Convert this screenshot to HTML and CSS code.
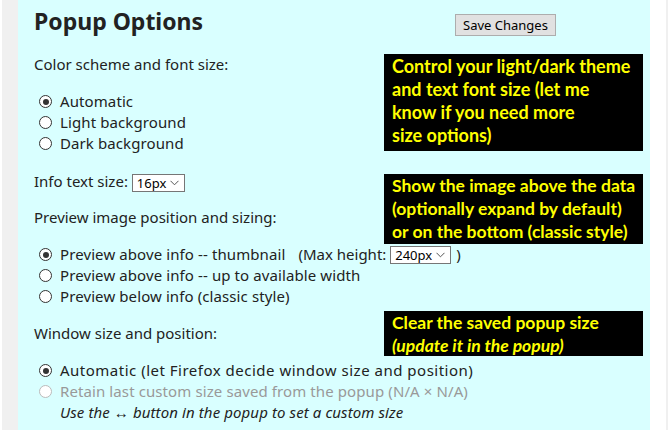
FILE: index.html
```html
<!DOCTYPE html>
<html>
<head>
<meta charset="utf-8">
<link rel="stylesheet" href="styles.css">
</head>
<body>
<div class="page">
  <div class="gutter-left"></div>
  <main class="panel">
    <header class="header">
      <h1 class="title">Popup Options</h1>
      <button class="save-btn" type="button">Save Changes</button>
    </header>

    <p class="label first">Color scheme and font size:</p>
    <ul class="radios">
      <li><span class="radio checked"></span>Automatic</li>
      <li><span class="radio"></span>Light background</li>
      <li><span class="radio"></span>Dark background</li>
    </ul>
    <p class="label info">Info text size: <span class="select select-16"><span class="select-text">16px</span><svg class="chev" width="9" height="6" viewBox="0 0 9 6"><path d="M0.5 0.8 L4.5 4.8 L8.5 0.8" fill="none" stroke="#555" stroke-width="1"/></svg></span></p>

    <p class="label">Preview image position and sizing:</p>
    <ul class="radios">
      <li><span class="radio checked"></span>Preview above info -- thumbnail<span class="maxh">(Max height: <span class="select select-240"><span class="select-text">240px</span><svg class="chev" width="9" height="6" viewBox="0 0 9 6"><path d="M0.5 0.8 L4.5 4.8 L8.5 0.8" fill="none" stroke="#555" stroke-width="1"/></svg></span> )</span></li>
      <li><span class="radio"></span>Preview above info -- up to available width</li>
      <li><span class="radio"></span>Preview below info (classic style)</li>
    </ul>

    <p class="label">Window size and position:</p>
    <ul class="radios">
      <li class="wide"><span class="radio checked"></span>Automatic (let Firefox decide window size and position)</li>
      <li class="disabled"><span class="radio"></span>Retain last custom size saved from the popup (N/A × N/A)</li>
      <li class="hint">Use the ↔ button in the popup to set a custom size</li>
    </ul>

    <div class="callout callout-1">Control your light/dark theme<br>and text font size (let me<br>know if you need more<br>size options)</div>
    <div class="callout callout-2">Show the image above the data<br>(optionally expand by default)<br>or on the bottom (classic style)</div>
    <div class="callout callout-3">Clear the saved popup size<br><em>(update it in the popup)</em></div>
  </main>
  <div class="gutter-right"></div>
</div>
</body>
</html>
```

FILE: styles.css
```css
html, body {
  margin: 0;
  padding: 0;
  background: #ffffff;
}

.page {
  display: flex;
  height: 430px;
  overflow: hidden;
}

.gutter-left {
  width: 16px;
  margin-left: 2px;
  background: #f0f0f0;
  flex: none;
}

.panel {
  position: relative;
  width: 616px;
  flex: none;
  background: #d9ffff;
  padding: 0 0 0 16px;
  font-family: "Noto Sans", sans-serif;
  font-size: 15px;
  color: #222;
}

.gutter-right {
  width: 16px;
  flex: none;
  background: #ffffff;
  border-right: 2px solid #f0f0f0;
}

.header {
  display: flex;
  align-items: flex-start;
  height: 44px;
}

.title {
  margin: 6px 0 0 0;
  font-size: 23px;
  line-height: 30px;
  font-weight: 700;
  color: #222;
}

.save-btn {
  margin: 14px 94px 0 auto;
  width: 101px;
  height: 22px;
  padding: 0;
  background: #e1e1e1;
  border: 1px solid #adadad;
  font-family: "Noto Sans", sans-serif;
  font-size: 13px;
  color: #000;
}

.label {
  margin: 0;
  line-height: 21px;
}

.label.first {
  margin-top: 10px;
}

.label.info {
  margin-top: 17px;
  margin-bottom: 15px;
}

.radios {
  list-style: none;
  margin: 16px 0 16px 0;
  padding: 0 0 0 5px;
  line-height: 21px;
}

.radios li {
  display: flex;
  align-items: center;
  white-space: nowrap;
  letter-spacing: 0.1px;
}

.radios li.wide {
  letter-spacing: 0.5px;
}

.radio {
  width: 11px;
  height: 11px;
  border: 1px solid #333;
  border-radius: 50%;
  background: #fff;
  margin-right: 8px;
  position: relative;
  flex: none;
}

.radio.checked::after {
  content: "";
  position: absolute;
  left: 2.5px;
  top: 2.5px;
  width: 6px;
  height: 6px;
  border-radius: 50%;
  background: #333;
}

.disabled {
  color: #999;
}

.disabled .radio {
  border-color: #bbb;
}

.hint {
  font-style: italic;
  padding-left: 21px;
}

.maxh {
  margin-left: 13px;
  display: inline-flex;
  align-items: center;
  letter-spacing: 0;
  white-space: pre;
}

.select {
  display: inline-flex;
  align-items: center;
  justify-content: space-between;
  box-sizing: border-box;
  height: 18px;
  border: 1px solid #767676;
  background: #fff;
  color: #000;
  font-size: 13px;
  padding: 0 5px 0 4px;
  vertical-align: middle;
  margin: 0 1px 0 0;
  letter-spacing: 0;
}

.select-16 { width: 53px; }
.select-240 { width: 61px; margin-left: 0; }

.select-text {
  line-height: 16px;
}

.callout {
  position: absolute;
  left: 366px;
  width: 259px;
  box-sizing: border-box;
  background: #000;
  color: #ffff00;
  font-family: Lato, sans-serif;
  font-weight: 700;
  font-size: 17.5px;
  line-height: 23px;
  padding: 0 4px 0 8px;
  white-space: nowrap;
}

.callout em {
  font-style: italic;
}

.callout-1 { top: 54px; height: 97px; padding-top: 1px; font-size: 18px; }
.callout-2 { top: 174px; height: 70px; }
.callout-3 { top: 311px; height: 45px; }
```
